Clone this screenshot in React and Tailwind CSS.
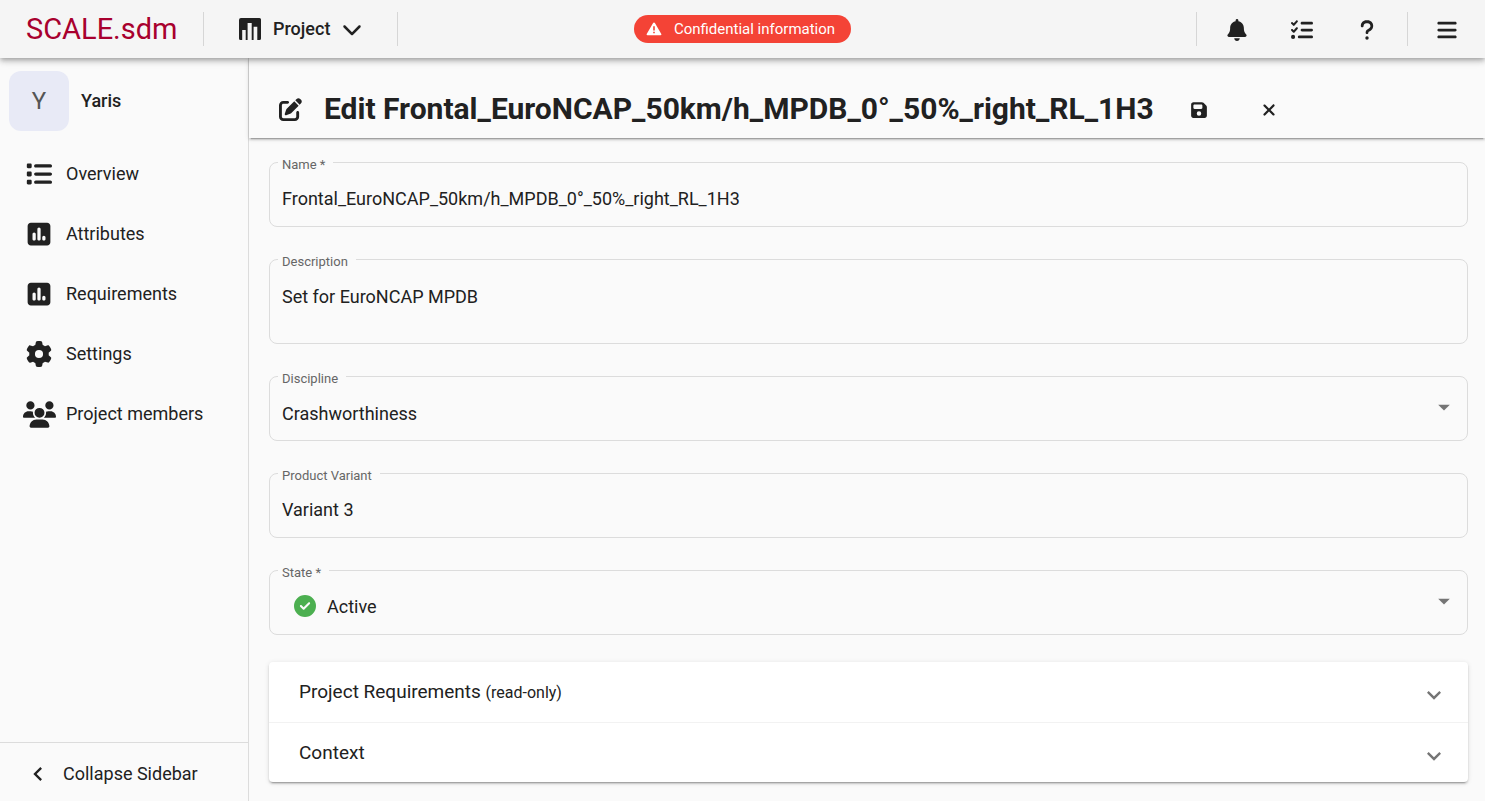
import React from 'react';
import {
  FaBars, FaBell, FaChevronDown, FaCircleCheck, FaFloppyDisk, FaGear,
  FaList, FaListCheck, FaPenToSquare, FaQuestion, FaSquarePollVertical,
  FaUsers, FaXmark
} from 'react-icons/fa6';
import { MdArrowDropDown, MdChevronLeft, MdExpandMore } from 'react-icons/md';

const navItems = [
  { label: 'Overview', icon: FaList, size: 26 },
  { label: 'Attributes', icon: FaSquarePollVertical, size: 26 },
  { label: 'Requirements', icon: FaSquarePollVertical, size: 26 },
  { label: 'Settings', icon: FaGear, size: 26 },
  { label: 'Project members', icon: FaUsers, size: 33 },
];

const sections = [
  { title: 'Project Requirements', hint: '(read-only)' },
  { title: 'Context' },
];

function ProjectIcon() {
  return (
    <svg width="22" height="22" viewBox="0 0 22 22" aria-hidden="true">
      <path
        fill="currentColor"
        d="M2 0h18.5a1.5 1.5 0 0 1 1.5 1.5v19a1.5 1.5 0 0 1-1.5 1.5H18.3V8.7H14.6V22H12.7V5H8.6V22H6.7V12H3.2V22H1.5A1.5 1.5 0 0 1 0 20.5V2a2 2 0 0 1 2-2z"
      />
    </svg>
  );
}

function WarningIcon() {
  return (
    <svg width="16" height="14" viewBox="0 0 16 14" aria-hidden="true">
      <path
        fill="currentColor"
        fillRule="evenodd"
        d="M8 .4c.4 0 .7.2.9.5l6.4 11.2c.3.6 0 1.2-.7 1.2H1.4c-.7 0-1-.6-.7-1.2L7.1.9C7.3.6 7.6.4 8 .4zM7.2 4.3v4.2h1.6V4.3zM7.2 9.7v1.6h1.6V9.7z"
      />
    </svg>
  );
}

function Divider() {
  return <div className="h-[34px] w-px bg-[#d6d6d6]" />;
}

function Field({ id, label, children }) {
  return (
    <div className="relative rounded-lg border border-[#dcdcdc]">
      <label
        htmlFor={id}
        className="absolute -top-2 left-2 bg-[#fafafa] pl-1 pr-2 text-[13px] leading-5 text-[#666666]"
      >
        {label}
      </label>
      {children}
    </div>
  );
}

export default function App() {
  return (
    <div className="flex min-h-screen flex-col bg-[#fafafa] font-[Roboto,sans-serif] text-lg leading-6 text-[#212121]">
      {/* Top bar */}
      <header className="relative z-20 grid h-[58px] grid-cols-[1fr_auto_1fr] items-center bg-[#f5f5f5] shadow-[0_2px_4px_-1px_rgba(0,0,0,0.2),0_4px_5px_rgba(0,0,0,0.14),0_1px_10px_rgba(0,0,0,0.12)]">
        <div className="flex items-center">
          <a href="#home" className="w-[203px] pl-[26px] text-[29px] leading-8 text-[#a8002e]">SCALE.sdm</a>
          <Divider />
          <button type="button" className="flex w-[193px] items-center gap-3 pl-[35px] font-medium">
            <ProjectIcon />
            Project
            <FaChevronDown size={20} />
          </button>
          <Divider />
        </div>

        <div className="flex h-7 items-center gap-3 rounded-full bg-[#f44336] pl-3 pr-4 text-[15px] text-white">
          <WarningIcon />
          Confidential information
        </div>

        <div className="flex items-center justify-end">
          <Divider />
          <button type="button" aria-label="Notifications" className="ml-[7px] flex w-[65px] justify-center pt-0.5">
            <FaBell size={22} />
          </button>
          <button type="button" aria-label="Tasks" className="flex w-[65px] justify-center pt-0.5">
            <FaListCheck size={22} />
          </button>
          <button type="button" aria-label="Help" className="mr-2 flex w-[65px] justify-center pt-0.5">
            <FaQuestion size={22} />
          </button>
          <Divider />
          <button type="button" aria-label="Menu" className="flex w-[77px] justify-center pt-0.5">
            <FaBars size={22} />
          </button>
        </div>
      </header>

      <div className="flex grow">
        {/* Sidebar */}
        <aside className="flex w-[249px] shrink-0 flex-col border-r border-[#dcdcdc]">
          <div className="flex items-center gap-3 px-[9px] pt-[13px]">
            <div className="flex size-[60px] items-center justify-center rounded-xl bg-[#e8eaf6] text-2xl text-[#555555]">Y</div>
            <span className="font-medium">Yaris</span>
          </div>
          <nav className="mt-[13px] grow">
            {navItems.map((item) => (
              <a key={item.label} href="#nav" className="flex h-[60px] items-center gap-[11px] pl-[23px]">
                <span className="flex w-8 justify-center">
                  <item.icon size={item.size} className="shrink-0" />
                </span>
                {item.label}
              </a>
            ))}
          </nav>
          <button type="button" className="flex h-[59px] items-center gap-[11px] border-t border-[#dcdcdc] pb-px pl-6 pt-1">
            <MdChevronLeft size={28} />
            Collapse Sidebar
          </button>
        </aside>

        <main className="flex min-w-0 grow flex-col">
          <div className="flex h-20 items-center pl-[30px] pt-[22px] shadow-[0_3px_1px_-2px_rgba(0,0,0,0.2),0_2px_2px_rgba(0,0,0,0.14),0_1px_5px_rgba(0,0,0,0.12)]">
            <FaPenToSquare size={23} />
            <h1 className="ml-[22px] text-[30px] font-bold leading-9">
              Edit Frontal_EuroNCAP_50km/h_MPDB_0°_50%_right_RL_1H3
            </h1>
            <button type="button" aria-label="Save" className="ml-2.5 flex w-[70px] justify-center pt-0.5">
              <FaFloppyDisk size={18} />
            </button>
            <button type="button" aria-label="Close" className="flex w-[70px] justify-center pt-0.5">
              <FaXmark size={18} />
            </button>
          </div>

          <form className="flex flex-col gap-8 pb-[18px] pl-5 pr-[17px] pt-6">
            <Field id="name" label="Name *">
              <input
                id="name"
                defaultValue="Frontal_EuroNCAP_50km/h_MPDB_0°_50%_right_RL_1H3"
                className="block w-full bg-transparent px-3 pb-[15px] pt-6 outline-none"
              />
            </Field>
            <Field id="description" label="Description">
              <textarea
                id="description"
                rows={1}
                defaultValue="Set for EuroNCAP MPDB"
                className="block w-full resize-none bg-transparent px-3 pb-[34px] pt-[25px] outline-none"
              />
            </Field>
            <Field id="discipline" label="Discipline">
              <select id="discipline" className="block w-full appearance-none bg-transparent px-3 pb-[14px] pt-[25px] outline-none">
                <option>Crashworthiness</option>
              </select>
              <MdArrowDropDown size={28} className="pointer-events-none absolute right-[9px] top-4 text-[#757575]" />
            </Field>
            <Field id="variant" label="Product Variant">
              <input
                id="variant"
                defaultValue="Variant 3"
                className="block w-full bg-transparent px-3 pb-[15px] pt-6 outline-none"
              />
            </Field>
            <Field id="state" label="State *">
              <FaCircleCheck size={22} className="pointer-events-none absolute left-6 top-6 text-[#4caf50]" />
              <select id="state" className="block w-full appearance-none bg-transparent pb-[15px] pl-[57px] pr-3 pt-6 outline-none">
                <option>Active</option>
              </select>
              <MdArrowDropDown size={28} className="pointer-events-none absolute right-[9px] top-4 text-[#757575]" />
            </Field>

            <div className="-mt-[5px] rounded bg-white shadow-[0_3px_1px_-2px_rgba(0,0,0,0.2),0_2px_2px_rgba(0,0,0,0.14),0_1px_5px_rgba(0,0,0,0.12)]">
              {sections.map((section) => (
                <button
                  key={section.title}
                  type="button"
                  className="flex h-[60px] w-full items-center justify-between border-[#f2f2f2] pl-[30px] pr-5 text-left text-[19px] not-first:border-t"
                >
                  <span>
                    {section.title} {section.hint && <span className="text-base">{section.hint}</span>}
                  </span>
                  <MdExpandMore size={28} className="mt-1.5 text-[#757575]" />
                </button>
              ))}
            </div>
          </form>
        </main>
      </div>
    </div>
  );
}
